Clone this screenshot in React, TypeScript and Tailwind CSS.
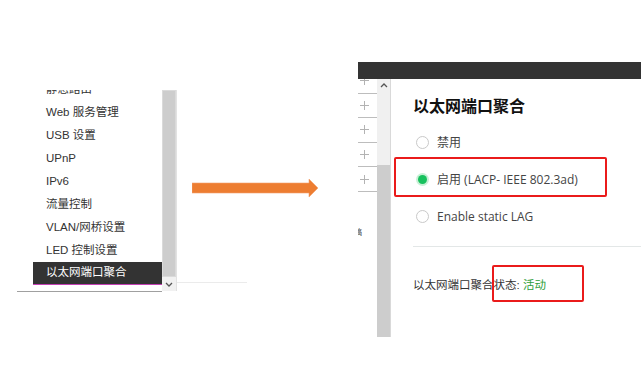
import React from 'react';

const menuItems = [
  '静态路由',
  'Web 服务管理',
  'USB 设置',
  'UPnP',
  'IPv6',
  '流量控制',
  'VLAN/网桥设置',
  'LED 控制设置',
  '以太网端口聚合',
];

const menuFont = { fontFamily: '"Liberation Sans", "Noto Sans CJK SC", sans-serif' };
const bodyFont = { fontFamily: '"Open Sans", "Noto Sans CJK SC", sans-serif' };

function Chevron({ up }: { up?: boolean }) {
  return (
    <svg width="8" height="5" viewBox="0 0 8 5" className="text-[#555]">
      <polyline
        points={up ? '1,4 4,1 7,4' : '1,1 4,4 7,1'}
        fill="none"
        stroke="currentColor"
        strokeWidth="1.3"
      />
    </svg>
  );
}

function Radio({ checked }: { checked?: boolean }) {
  if (checked) {
    return (
      <span className="w-[13px] h-[13px] rounded-full bg-[#c8f0d6] flex items-center justify-center shrink-0">
        <span className="w-[9px] h-[9px] rounded-full bg-[#18c15e]" />
      </span>
    );
  }
  return <span className="w-[13px] h-[13px] rounded-full border border-[#c9c9c9] bg-white shrink-0" />;
}

function SideMenu() {
  return (
    <div className="flex ml-[17px] mt-[90px]" style={menuFont}>
      {/* menu list, scrolled so the first entry is half hidden */}
      <div className="w-[145px] h-[202px] border-b border-[#a0a0a0] overflow-hidden">
        <div className="-mt-[12px] pl-[16px]">
          {menuItems.map((item, i) => {
            const active = i === menuItems.length - 1;
            return (
              <div
                key={item}
                className={`h-[23px] flex items-center pl-[13px] text-[11.5px] ${
                  active ? 'bg-[#333333] text-white border-b border-[#c23fb3]' : 'text-[#333]'
                }`}
              >
                {item}
              </div>
            );
          })}
        </div>
      </div>

      {/* scrollbar */}
      <div className="w-[15px] h-[201px] flex flex-col bg-[#f1f1f1] border-r border-[#e2e2e2]">
        <div className="h-[187px] bg-[#cdcdcd] border border-[#dadada]" />
        <div className="flex-1 flex items-center justify-center">
          <Chevron />
        </div>
      </div>

      {/* faint edge of the page under the menu */}
      <div className="w-[70px] h-[193px] border-b border-[#ebebeb]" />
    </div>
  );
}

function Arrow() {
  return (
    <svg width="126" height="18" viewBox="0 0 126 18" className="-ml-[55px] mt-[179px] shrink-0">
      <path d="M0 4 H117 V0 L126 9 L117 18 V14 H0 Z" fill="#ed7d31" stroke="#f3a36f" strokeWidth="0.6" />
    </svg>
  );
}

function SettingsPanel() {
  return (
    <div className="relative ml-[40px] mt-[62px] flex-1 h-[275px] flex flex-col">
      <div className="h-[17px] bg-[#333333]" />
      <div className="flex flex-1 min-h-0">
        {/* collapsed tree strip */}
        <div className="w-[19px] overflow-hidden bg-white">
          <div className="-mt-[10px]">
            {[0, 1, 2, 3, 4].map((n) => (
              <div
                key={n}
                className="h-[24.6px] border-b border-[#bdbdbd] flex items-center pl-[2px] text-[#b3b3b3]"
              >
                <svg width="9" height="9" viewBox="0 0 9 9">
                  <path d="M4.5 0 V9 M0 4.5 H9" stroke="currentColor" strokeWidth="1" />
                </svg>
              </div>
            ))}
          </div>
          <div className="mt-[36px] -ml-[4px] text-[8px] leading-[10px] text-[#444]" style={menuFont}>
            稿
          </div>
        </div>

        {/* scrollbar */}
        <div className="w-[14px] flex flex-col border-r border-[#d9d9d9]">
          <div className="h-[86px] bg-[#f0f0f0] flex justify-center pt-[4px]">
            <Chevron up />
          </div>
          <div className="flex-1 bg-[#cdcdcd]" />
        </div>

        {/* content */}
        <div className="flex-1 flex flex-col pl-[22px]" style={bodyFont}>
          <h2 className="mt-[16px] h-[22px] leading-[22px] text-[16px] font-bold text-[#111]">以太网端口聚合</h2>
          <div className="mt-[7px] flex flex-col">
            <label className="h-[37px] flex items-center gap-[8px] pl-[3px] text-[12px] text-[#444]">
              <Radio />
              禁用
            </label>
            <label className="h-[37px] flex items-center gap-[8px] pl-[3px] text-[12px] text-[#444]">
              <Radio checked />
              启用 (LACP- IEEE 802.3ad)
            </label>
            <label className="h-[37px] flex items-center gap-[8px] pl-[3px] text-[12px] text-[#444]">
              <Radio />
              Enable static LAG
            </label>
          </div>
          <div className="mt-[11px] h-px bg-[#e3e7e7]" />
          <p className="mt-[30px] text-[11.5px] leading-[16px] text-[#333]" style={menuFont}>
            以太网端口聚合状态: <span className="text-[#2e9e3a]">活动</span>
          </p>
        </div>
      </div>

      {/* red annotation boxes */}
      <div className="absolute left-[36px] top-[95px] w-[213px] h-[40px] border-2 border-[#ea1b1b] rounded-[2px]" />
      <div className="absolute left-[134px] top-[203px] w-[92px] h-[37px] border-2 border-[#ea1b1b] rounded-[2px]" />
    </div>
  );
}

export default function App() {
  return (
    <div className="w-[641px] h-[375px] bg-white overflow-hidden flex items-start">
      <SideMenu />
      <Arrow />
      <SettingsPanel />
    </div>
  );
}
